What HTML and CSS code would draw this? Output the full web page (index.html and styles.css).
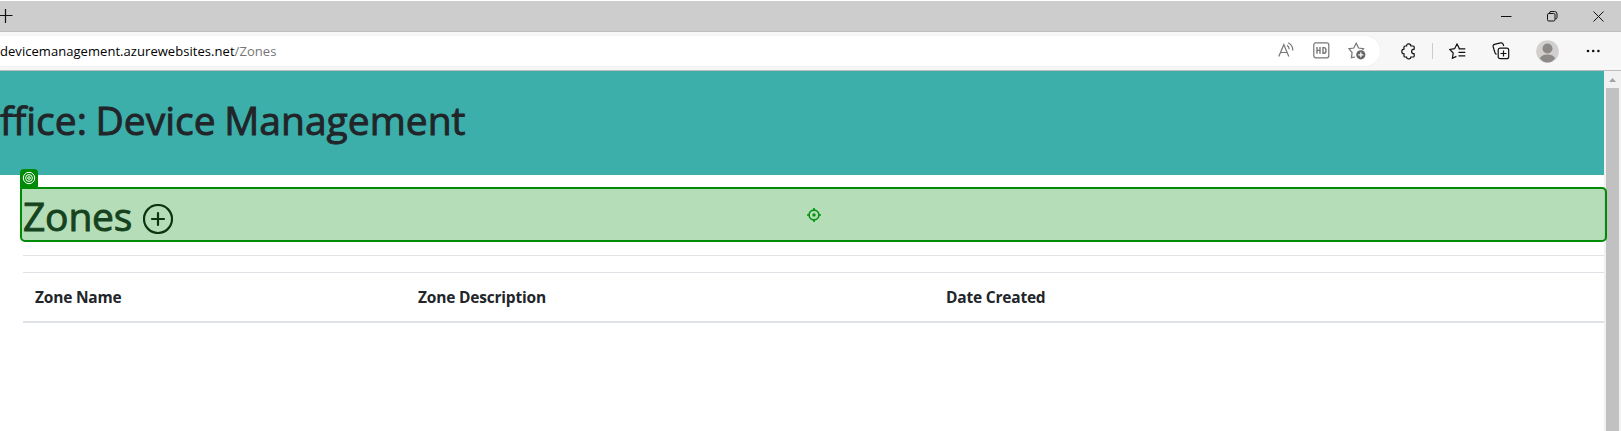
FILE: index.html
```html
<!DOCTYPE html>
<html lang="en">
<head>
<meta charset="utf-8">
<title>Device Management</title>
<link rel="stylesheet" href="styles.css">
</head>
<body>
<div class="browser">
  <div class="titlebar">
    <svg class="newtab" width="13" height="15" viewBox="0 0 13 15"><path d="M0 7.5H12.5M5.5 1V15" /></svg>
    <div class="controls">
      <svg width="11" height="11" viewBox="0 0 11 11"><path d="M0 5.5H10.5"/></svg>
      <svg width="11" height="11" viewBox="0 0 11 11"><rect x=".5" y="2.5" width="7.5" height="7.5" rx="1.3"/><path d="M2.5 2.5V2Q2.5 .5 4 .5H7.5Q10 .5 10 3V6.5Q10 8 8.3 8"/></svg>
      <svg width="11" height="11" viewBox="0 0 11 11"><path d="M.5 .5L10.5 10.5M10.5 .5L.5 10.5"/></svg>
    </div>
  </div>
  <div class="toolbar">
    <div class="address">
      <div class="url">devicemanagement.azurewebsites.net<span>/Zones</span></div>
      <div class="address-icons">
        <svg width="17" height="17" viewBox="0 0 17 17"><path d="M.8 14.5L5.8 2.5L10.8 14.5M2.5 10.5H9.1M9 3.2Q11 4.5 11.2 7.3M10.2 .8Q14.8 3 14.8 8.5"/></svg>
        <svg width="17" height="17" viewBox="0 0 17 17"><rect x=".8" y=".8" width="15" height="15" rx="2"/><path class="hd" d="M4 5V11.8M7 5V11.8M4 8.4H7M10 5.6V11.2H11Q13 11.2 13 8.4Q13 5.6 11 5.6Z"/></svg>
        <svg width="18" height="18" viewBox="0 0 18 18"><path d="M7 15L3.4 15.7L4.1 10.6L1 6.7L5.8 6L8.2 1.2L10.6 6L15.5 6.7L14.4 8"/><circle class="solid" cx="12.8" cy="12.8" r="4.6"/><path class="knock" d="M10.3 12.8H15.3M12.8 10.3V15.3"/></svg>
      </div>
    </div>
    <div class="tools">
      <svg class="puzzle" width="16" height="17" viewBox="0 0 16 17"><path d="M4 3H5.6Q5.6 .8 7.7 .8T9.9 3H12.2Q13.2 3 13.2 4V6.2Q10.6 6.2 10.6 8.5T13.2 10.8V13Q13.2 14 12.2 14H9.9Q9.9 15.8 7.7 15.8T5.6 14H4Q3 14 3 13V10.8Q.8 10.8 .8 8.5T3 6.2V4Q3 3 4 3Z"/></svg>
      <span class="divider"></span>
      <svg class="favs" width="17" height="17" viewBox="0 0 17 17"><path d="M9.5 5.7H10.5L8 1L5.6 5.7L.8 6.4L4.2 10L3.4 15.3L7.4 13.4M10 5.9H16.3M9.5 9.4H16.3M9.5 12.9H16.3"/></svg>
      <svg class="collections" width="18" height="18" viewBox="0 0 18 18"><rect x="6.2" y="6.2" width="10.5" height="10.5" rx="2"/><path d="M8.5 11.5H14.5M11.5 8.5V14.5M4.5 12.4Q3.5 12 3 10.8L1.2 5Q.7 3 2.4 2.4L8.5 .9Q10.5 .5 11.2 2.3L11.7 4"/></svg>
      <svg class="avatar" width="23" height="23" viewBox="0 0 23 23"><circle cx="11.5" cy="11.5" r="11.3" fill="#d2d0ce"/><circle cx="11.5" cy="8.5" r="5" fill="#8c8986"/><path d="M3.8 18.3Q5.5 14.5 11.5 14.5T19.2 18.3Q16.2 22.5 11.5 22.6Q6.8 22.5 3.8 18.3Z" fill="#8c8986"/></svg>
      <svg class="more" width="14" height="4" viewBox="0 0 14 4"><circle cx="2" cy="2" r="1.3"/><circle cx="7.2" cy="2" r="1.3"/><circle cx="12.4" cy="2" r="1.3"/></svg>
    </div>
  </div>
  <div class="viewport">
    <div class="page">
      <header class="banner"><h1>ffice: Device Management</h1></header>
      <main class="content">
        <section class="heading">
          <h2>Zones</h2>
          <svg class="add" width="30" height="30" viewBox="0 0 30 30"><circle cx="15" cy="15" r="14"/><path d="M9 15H21M15 9V21" stroke-linecap="round"/></svg>
          <div class="highlight">
            <div class="tag"><svg width="14" height="14" viewBox="0 0 14 14"><circle cx="7" cy="7" r="5.7"/><circle cx="7" cy="7" r="3.4"/><circle cx="7" cy="7" r="1.3"/></svg></div>
            <svg class="target" width="14" height="14" viewBox="0 0 14 14"><circle cx="7" cy="7" r="4.9"/><path d="M7 0V2M7 12V14M0 7H2M12 7H14"/><circle class="dot" cx="7" cy="7" r="1.7"/></svg>
          </div>
        </section>
        <hr>
        <table>
          <thead><tr><th class="c1"><span>Zone Name</span></th><th class="c2"><span>Zone Description</span></th><th><span>Date Created</span></th></tr></thead>
        </table>
      </main>
    </div>
    <div class="scrollbar"><div class="arrow"></div><div class="thumb"></div></div>
  </div>
</div>
</body>
</html>
```
FILE: styles.css
```css
* { box-sizing: border-box; }
body { margin: 0; background: #fff; color: #212529; font-family: "Open Sans", "Noto Sans", sans-serif; overflow: hidden; }
svg { display: block; flex: none; fill: none; stroke: #111; stroke-width: 1.2; }
.browser { display: flex; flex-direction: column; width: 1621px; height: 431px; overflow: hidden; padding-top: 1px; }
.titlebar { flex: none; display: flex; justify-content: space-between; height: 31px; background: #cdcdcd; border-bottom: 1px solid #c0c0c0; }
.newtab { margin-top: 7px; }
.controls { display: flex; gap: 35px; padding: 10px 17px 0 0; }
.controls svg { stroke-width: 1; }
.toolbar { flex: none; display: flex; height: 39px; padding-top: 4px; background: #f7f7f7; border-bottom: 1px solid #bdbdbd; }
.address { display: flex; justify-content: space-between; width: 1380px; height: 30px; background: #fff; border-radius: 0 15px 15px 0; box-shadow: 0 0 2px #e8e8e8; }
.url { font-size: 13px; letter-spacing: .05px; line-height: 30px; color: #000; white-space: nowrap; }
.url span { color: #767676; }
.address-icons { display: flex; gap: 18px; padding: 6px 14px 0 0; }
.address-icons svg { stroke: #767676; }
.address-icons .hd { stroke-width: 1.4; }
.address-icons .solid { fill: #666; stroke: none; }
.address-icons .knock { stroke: #fff; }
.tools { display: flex; align-items: center; height: 30px; padding-left: 21px; }
.divider { width: 1px; height: 16px; margin: 0 16px 0 15px; background: #ccc; }
.collections { margin-left: 26px; }
.avatar { margin-left: 26px; stroke: none; }
.more { margin-left: 27px; fill: #111; stroke: none; }
.viewport { display: flex; flex: 1; min-height: 0; }
.page { width: 1604px; }
.banner { height: 104px; padding-top: 21px; background: #3cafaa; overflow: hidden; }
h1, h2 { margin: 0; font-size: 39px; font-weight: 400; line-height: 56px; white-space: nowrap; -webkit-text-stroke: .9px currentColor; }
h1 { letter-spacing: 0; word-spacing: -1.5px; }
h2 { width: 109px; margin-top: -1px; letter-spacing: -.2px; }
.content { padding: 14px 0 0 23px; }
.heading { position: relative; display: flex; height: 51px; }
.add { margin: 15px 0 0 11px; stroke-width: 2.2; }
.highlight { position: absolute; left: -3px; top: -2px; width: 1587px; height: 55px; background: rgba(0, 139, 7, .29); border: 2px solid #008b07; border-radius: 0 5px 5px 5px; }
.tag { position: absolute; left: -2px; top: -20px; width: 18px; height: 20px; padding: 2px; background: #008b07; border-radius: 4px 4px 0 0; }
.tag svg { stroke: #fff; stroke-width: 1; }
.target { position: absolute; left: 785px; top: 19px; stroke: #079412; stroke-width: 1.7; }
.target .dot { fill: #079412; stroke: none; }
hr { height: 1px; margin: 15px 0 16px; border: 0; background: #e3e3e3; }
table { width: 100%; border-collapse: separate; border-spacing: 0; table-layout: fixed; }
th { height: 51px; padding: 0 12px; border-top: 1px solid #dee2e6; border-bottom: 2px solid #dee2e6; font-size: 15.5px; line-height: 24px; font-weight: 700; letter-spacing: -.2px; text-align: left; white-space: nowrap; }
.c1 { width: 383px; }
.c2 { width: 528px; }
.scrollbar { width: 17px; padding-left: 2px; background: #f1f1f1; }
.arrow { width: 7px; height: 4px; margin: 7px 0 6px 3px; background: #a3a3a3; clip-path: polygon(50% 0, 100% 100%, 0 100%); }
.thumb { width: 13px; height: 400px; background: #c1c1c1; }
```
